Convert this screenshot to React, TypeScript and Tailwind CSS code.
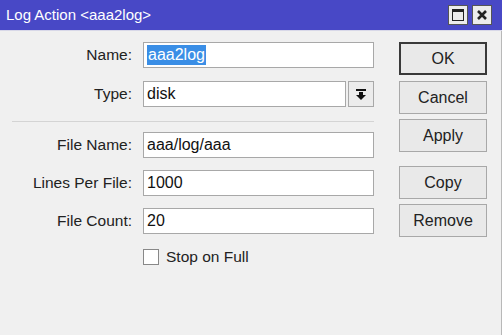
import React from "react";

const font = { fontFamily: '"Liberation Sans", Arial, sans-serif' };

function Field({ label, value, selected }: { label: string; value: string; selected?: boolean }) {
  return (
    <div className="flex h-[26px] items-center">
      <span className="w-[133px] pr-[1px] text-right text-[15.5px] text-[#222]">{label}</span>
      <div className="ml-[10px] flex h-full w-[231px] items-center border border-[#a8a8a8] bg-white pl-[3px] text-[16px] text-[#111]">
        {selected ? <span className="bg-[#3a8ee6] px-[1px] leading-[20px] text-white">{value}</span> : value}
      </div>
    </div>
  );
}

function Btn({ label, primary }: { label: string; primary?: boolean }) {
  return (
    <button
      className={`flex h-[33px] w-[88px] items-center justify-center bg-[#e9e9e9] text-[16px] text-[#222] ${
        primary ? "border-2 border-[#3a3a3a]" : "border border-[#a8a8a8]"
      }`}
    >
      {label}
    </button>
  );
}

export default function App() {
  return (
    <div className="h-[335px] w-[502px] overflow-hidden bg-[#f0f0f0]" style={font}>
      <div className="flex h-[31px] items-center justify-between border-b border-[#d8d8e8] bg-[#4848c6] pl-[6px] pr-[10px]">
        <span className="text-[15px] text-white">Log Action &lt;aaa2log&gt;</span>
        <div className="flex gap-[4px]">
          <div className="flex h-[20px] w-[20px] items-center justify-center border border-[#555] bg-[#ececec]">
            <div className="h-[12px] w-[12px] border border-t-[3px] border-[#222]" />
          </div>
          <div className="flex h-[20px] w-[20px] items-center justify-center border border-[#555] bg-[#ececec]">
            <svg width="12" height="12" viewBox="0 0 12 12">
              <path d="M2 2 L10 10 M10 2 L2 10" stroke="#222" strokeWidth="2.6" />
            </svg>
          </div>
        </div>
      </div>

      <div className="flex h-[304px] border-r border-[#b8b8b8]">
        <div className="flex w-[374px] flex-col pt-[11px]">
          <Field label="Name:" value="aaa2log" selected />
          <div className="mt-[13px] flex h-[26px] items-center">
            <span className="w-[133px] pr-[1px] text-right text-[15.5px] text-[#222]">Type:</span>
            <div className="ml-[10px] flex h-full w-[203px] items-center border border-[#a8a8a8] bg-white pl-[3px] text-[16px] text-[#111]">
              disk
            </div>
            <div className="ml-[2px] flex h-full w-[26px] items-center justify-center border border-[#a8a8a8] bg-[#ececec]">
              <svg width="10" height="11" viewBox="0 0 10 11">
                <rect x="0" y="0" width="10" height="2" fill="#111" />
                <rect x="3" y="3" width="4" height="3" fill="#111" />
                <path d="M0 6 L10 6 L5 11 Z" fill="#111" />
              </svg>
            </div>
          </div>
          <div className="ml-[12px] mt-[14px] h-[2px] border-t border-[#d4d4d4] border-b-white" />
          <div className="mt-[9px] flex flex-col gap-[12px]">
            <Field label="File Name:" value="aaa/log/aaa" />
            <Field label="Lines Per File:" value="1000" />
            <Field label="File Count:" value="20" />
          </div>
          <div className="ml-[143px] mt-[11px] flex items-center gap-[7px]">
            <div className="h-[16px] w-[16px] border border-[#888] bg-white" />
            <span className="text-[15.5px] text-[#222]">Stop on Full</span>
          </div>
        </div>

        <div className="ml-[25px] flex flex-col pt-[11px]">
          <Btn label="OK" primary />
          <div className="mt-[6px]">
            <Btn label="Cancel" />
          </div>
          <div className="mt-[5px]">
            <Btn label="Apply" />
          </div>
          <div className="mt-[14px]">
            <Btn label="Copy" />
          </div>
          <div className="mt-[5px]">
            <Btn label="Remove" />
          </div>
        </div>
      </div>
    </div>
  );
}
